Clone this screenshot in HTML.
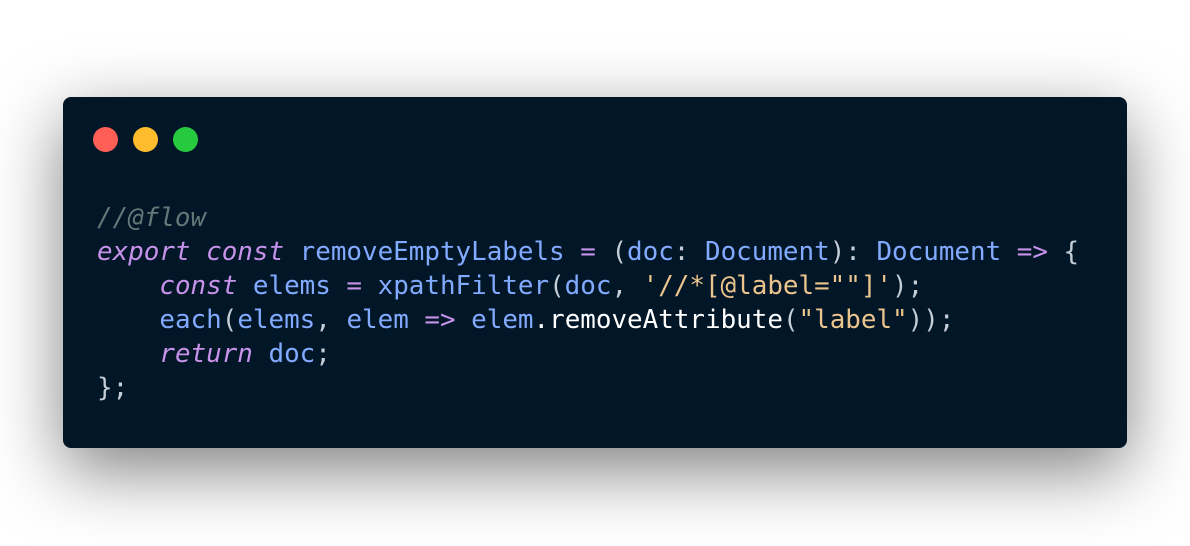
<!DOCTYPE html>
<html><head><style>
html,body{margin:0;width:1190px;height:546px;background:#fff;overflow:hidden}
.w{position:absolute;left:63px;top:97px;width:1064px;height:351px;background:#011627;border-radius:8px;box-shadow:0 22px 70px rgba(0,0,0,0.5)}
.d{position:absolute;top:30px;width:25px;height:25px;border-radius:50%}
pre{position:absolute;left:34px;top:104px;margin:0;font-family:"DejaVu Sans Mono",monospace;font-size:25.9px;line-height:34px;color:#d6deeb}
.c{color:#637777;font-style:italic}.k{color:#c792ea;font-style:italic}.o{color:#c792ea}.b{color:#82aaff}.s{color:#ecc48d}.p{color:#c5cdd6}.wh{color:#fff}
</style></head><body>
<div class="w">
<div class="d" style="left:30px;background:#ff5f56"></div>
<div class="d" style="left:70px;background:#ffbd2e"></div>
<div class="d" style="left:110px;background:#27c93f"></div>
<pre><span class="c">//@flow</span>
<span class="k">export</span> <span class="k">const</span> <span class="b">removeEmptyLabels</span> <span class="o">=</span> <span class="p">(</span><span class="b">doc</span><span class="p">:</span> <span class="b">Document</span><span class="p">):</span> <span class="b">Document</span> <span class="o">=&gt;</span> <span class="p">{</span>
    <span class="k">const</span> <span class="b">elems</span> <span class="o">=</span> <span class="b">xpathFilter</span><span class="p">(</span><span class="b">doc</span><span class="p">,</span> <span class="s">'//*[@label=""]'</span><span class="p">);</span>
    <span class="b">each</span><span class="p">(</span><span class="b">elems</span><span class="p">,</span> <span class="b">elem</span> <span class="o">=&gt;</span> <span class="b">elem</span><span class="wh">.removeAttribute</span><span class="p">(</span><span class="s">"label"</span><span class="p">));</span>
    <span class="k">return</span> <span class="b">doc</span><span class="p">;</span>
<span class="p">};</span></pre>
</div>
</body></html>
